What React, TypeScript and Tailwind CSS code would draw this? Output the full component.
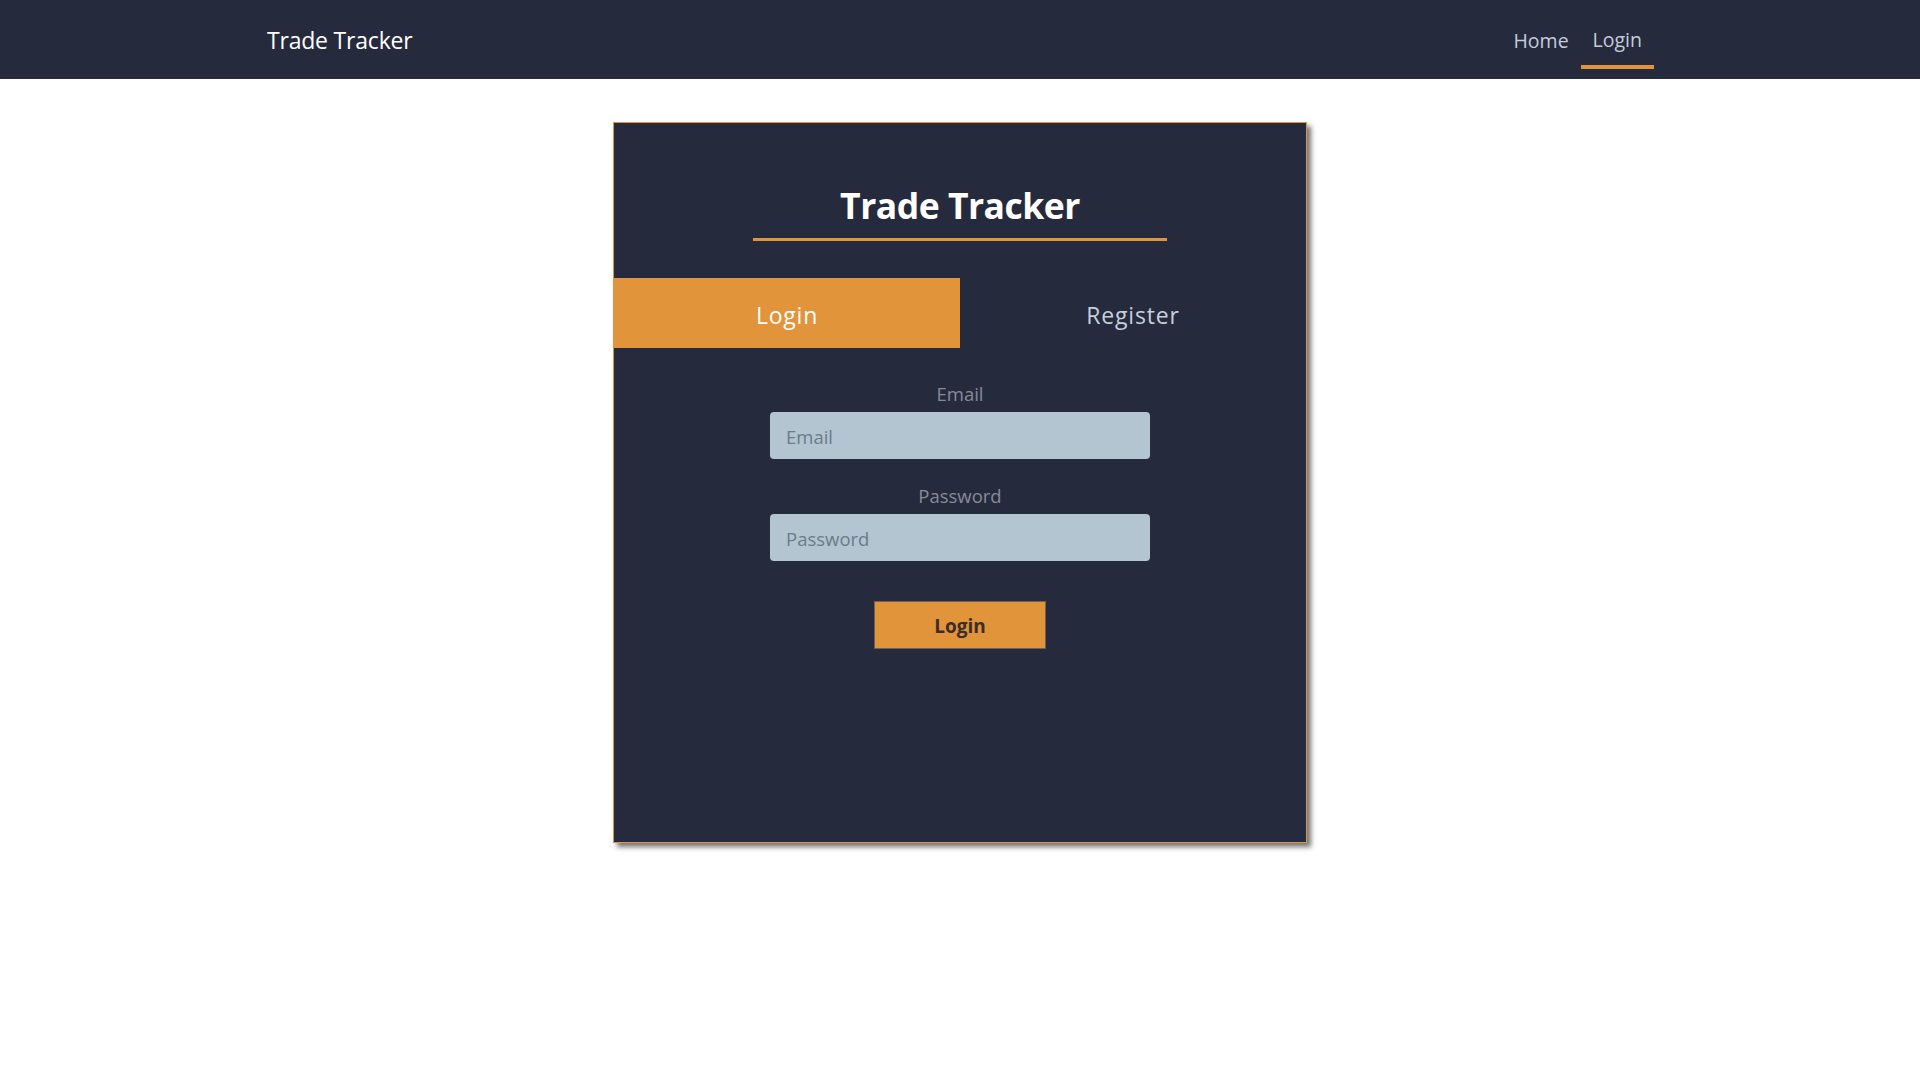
import React, { useState } from "react";

export default function App() {
  const [tab, setTab] = useState<"login" | "register">("login");
  const [email, setEmail] = useState("");
  const [password, setPassword] = useState("");

  return (
    <div className="min-h-screen bg-white font-['Open_Sans',sans-serif]">
      {/* Top navbar */}
      <nav className="h-[79px] bg-[#262a3d]">
        <div className="mx-auto flex h-full w-[1400px] items-center justify-between pl-[7px] pr-[6px]">
          <a href="#" className="pt-[2px] text-[23px] leading-none text-white tracking-[-0.2px]">
            Trade Tracker
          </a>
          <div className="flex h-full items-center">
            <a href="#" className="flex h-full items-center px-3 pt-[2px] text-[19.5px] text-[#c3cddb]">
              Home
            </a>
            <a href="#" className="relative flex h-full items-center px-3 text-[19.5px] text-[#c3cddb]">
              Login
              <span className="absolute bottom-[10px] left-0 right-0 h-[4px] bg-[#e1943a]" />
            </a>
          </div>
        </div>
      </nav>

      {/* Auth card */}
      <div className="mx-auto mt-[43px] flex h-[721px] w-[694px] flex-col border border-[#e1943a] bg-[#262a3d] shadow-[4px_4px_5px_rgba(0,0,0,0.55)]">
        <h1 className="mt-[58px] text-center text-[35.5px] font-bold leading-[48px] text-white tracking-[-0.5px]">
          Trade Tracker
        </h1>
        <div className="mx-auto mt-[9px] h-[3px] w-[414px] bg-[#e1943a]" />

        <div className="mt-[37px] grid h-[70px] grid-cols-2">
          <button
            onClick={() => setTab("login")}
            className={`pt-[4px] text-[23px] tracking-[0.8px] ${tab === "login" ? "bg-[#e1943a] text-white" : "text-[#c6cfdc]"}`}
          >
            Login
          </button>
          <button
            onClick={() => setTab("register")}
            className={`pt-[4px] text-[23px] tracking-[0.8px] ${tab === "register" ? "bg-[#e1943a] text-white" : "text-[#c6cfdc]"}`}
          >
            Register
          </button>
        </div>

        <form className="mt-[34px] flex flex-col items-center" onSubmit={(e) => e.preventDefault()}>
          <label className="mb-[6px] text-[18.5px] leading-[24px] text-[#868b98]">Email</label>
          <input
            value={email}
            onChange={(e) => setEmail(e.target.value)}
            placeholder="Email"
            className="h-[47px] w-[380px] rounded-[4px] bg-[#b2c5d1] px-4 pt-[2px] text-[18.5px] text-[#2a2f3d] placeholder:text-[#6d7b88] outline-none"
          />
          <label className="mb-[6px] mt-[25px] text-[18.5px] leading-[24px] text-[#868b98]">Password</label>
          <input
            type="password"
            value={password}
            onChange={(e) => setPassword(e.target.value)}
            placeholder="Password"
            className="h-[47px] w-[380px] rounded-[4px] bg-[#b2c5d1] px-4 pt-[2px] text-[18.5px] text-[#2a2f3d] placeholder:text-[#6d7b88] outline-none"
          />
          <button
            type="submit"
            className="mt-[40px] h-[48px] w-[172px] border border-[#6f6254] bg-[#e1943a] pt-[2px] text-[19px] font-bold text-[#3b2d28]"
          >
            Login
          </button>
        </form>
      </div>
    </div>
  );
}
